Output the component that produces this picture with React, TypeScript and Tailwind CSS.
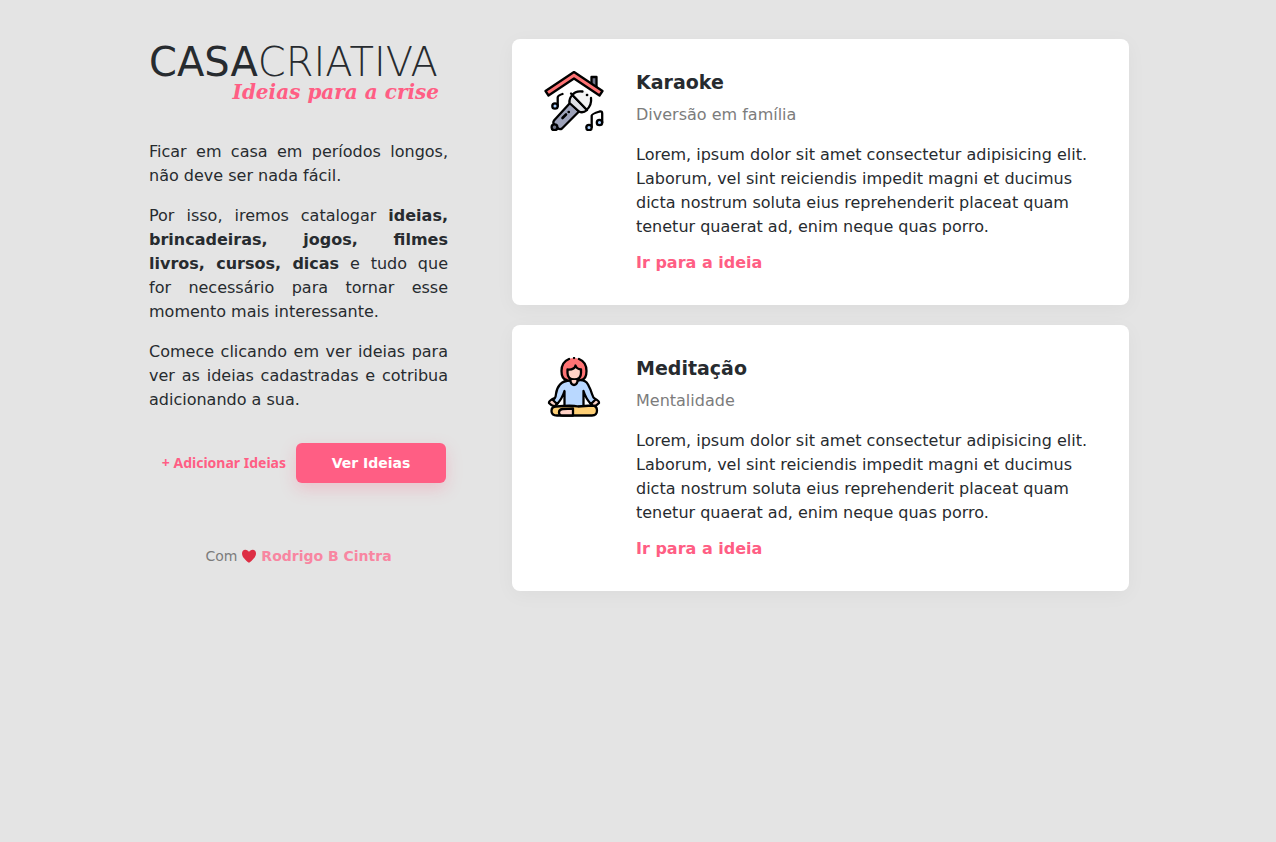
import React from "react";

type Idea = {
  title: string;
  category: string;
  description: string;
  icon: React.ReactNode;
};

function KaraokeIcon() {
  return (
    <svg viewBox="0 0 60 60" className="size-[60px]" fill="none" stroke="#000" strokeWidth="2.3" strokeLinecap="round" strokeLinejoin="round" aria-hidden="true">
      <path d="M47.500 13V6h5v11" fill="#707487" />
      <path d="M1.500 20 30 1l28.500 19-3 4.500L30 7.500 4.500 24.500Z" fill="#fe7374" />
      <path d="m10 49.500 16-17.500 9 8.500-17 17q-2 1.500-4.500-.5l-3-3q-2-2-.5-4.500Z" fill="#9da2b9" />
      <path d="M25.500 32q-.5-5 3-8L43 39q-4 3.500-8 1.500Z" fill="#dfe1e6" />
      <path d="M28 24 43 39q4.500-3.500 4.500-9.500a11 11 0 0 0-11-10.500Q31 19 28 24Z" fill="#f3f3f3" stroke="none" />
      <path d="M27 22.500 43 39M28.500 24q3-4.500 10-3.500M47 27q1 7-4.500 12" />
      <path d="M43 24h.1" strokeWidth="2.600" />
      <path d="m18.500 47 3.500-3.500M24.700 41h.1" strokeWidth="2.600" />
      <circle cx="10.500" cy="56.300" r="2.900" fill="#707487" />
      <path d="M13.700 35V26.500q0-2 4.800-3.500" />
      <circle cx="11" cy="35" r="2.700" fill="#a9cfff" />
      <path d="M47.700 56V44.500q0-1.500 8-4 2.500-.5 2.500 2V51.500" />
      <circle cx="45" cy="56.500" r="2.700" fill="#a9cfff" />
      <circle cx="55.500" cy="51.500" r="2.700" fill="#a9cfff" />
    </svg>
  );
}

function MeditationIcon() {
  return (
    <svg viewBox="0 0 60 60" className="size-[60px]" fill="none" stroke="#000" strokeWidth="2.300" strokeLinecap="round" strokeLinejoin="round" aria-hidden="true">
      <path d="M21 22.500q-3.500-2-3.500-8.500C17.500 5 24 1 30 1s12.500 4 12.500 13q0 6.500-3.500 8.500l-4 1H25Z" fill="#fe7374" stroke="none" />
      <path d="M25 2Q17.500 5 17.500 14q0 8 5 9M35 2q7.500 3 7.500 12 0 8-5 9M30 1h.1" />
      <path d="M23.500 12.500q7 .5 8-4 1 3.500 5.500 4v3.500q0 6.500-6.700 6.500t-6.800-6.500Z" fill="#ffd2c6" />
      <path d="M9.500 41.500q-5 2.500-4.500 4.500 3 3.500 6 3l3-3ZM50.500 41.500q5 2.500 4.500 4.500-3 3.500-6 3l-3-3Z" fill="#ffd2c6" />
      <path d="M26.500 23.500q-7 0-10.500 4T12 37t-3.500 5.500l4.500 4.500q5-5 7.500-13v16h19V34q2.500 8 7.500 13l4.500-4.500Q49 41 48 37t-4-9.500-10.500-4Z" fill="#b9d8ff" />
      <path d="M26.500 23v1.500q1 3.500 3.500 3.500t3.500-3.500V23" fill="#ffd2c6" />
      <path d="M12 49.500q16-1.500 22 0l14-1q5 0 5 5t-5 5H13q-5.500 0-5.500-4.500t4.500-4.500Z" fill="#ffd076" />
      <path d="m29 51.500-10.500.5q-3.500.5-3.500 3.500t4 3H29Z" fill="#ffd2c6" />
    </svg>
  );
}

const description =
  "Lorem, ipsum dolor sit amet consectetur adipisicing elit. Laborum, vel sint reiciendis impedit magni et ducimus dicta nostrum soluta eius reprehenderit placeat quam tenetur quaerat ad, enim neque quas porro.";

const ideas: Idea[] = [
  { title: "Karaoke", category: "Diversão em família", description, icon: <KaraokeIcon /> },
  { title: "Meditação", category: "Mentalidade", description, icon: <MeditationIcon /> },
];

function Logo() {
  return (
    <h1 className="w-[290px] text-[40px] leading-[46px] whitespace-nowrap">
      <span>CASA</span>
      <span className="font-extralight">CRIATIVA</span>
      <span className="block text-right font-['DejaVu_Serif',serif] text-xl leading-[14px] font-bold text-[#ff5e84] italic">
        Ideias para a crise
      </span>
    </h1>
  );
}

function IdeaCard({ idea }: { idea: Idea }) {
  return (
    <article className="flex items-start gap-8 rounded-lg bg-white p-8 shadow-[0_4px_20px_rgba(0,0,0,0.04)]">
      <div className="shrink-0">{idea.icon}</div>
      <div className="min-w-0">
        <h2 className="text-[19px] leading-[22px] font-bold">{idea.title}</h2>
        <p className="mt-[10px] text-[#7c7c7c]">{idea.category}</p>
        <p className="mt-4">{idea.description}</p>
        <a href="#ideia" className="mt-[14px] block w-fit leading-5 font-bold text-[#ff5e84]">
          Ir para a ideia
        </a>
      </div>
    </article>
  );
}

export default function App() {
  return (
    <div className="min-h-screen bg-[#e4e4e4] pr-6 pl-[26px] font-['DejaVu_Sans',sans-serif] text-base leading-6 text-[#272b2f]">
      <div className="mx-auto grid max-w-[980px] grid-cols-[299px_minmax(0,1fr)] gap-16 pt-[39px] pb-10">
        <aside>
          <Logo />
          <div className="mt-[41px] space-y-4 text-justify">
            <p>Ficar em casa em períodos longos, não deve ser nada fácil.</p>
            <p>
              Por isso, iremos catalogar <strong>ideias,</strong> <strong>brincadeiras, jogos, filmes</strong>{" "}
              <strong>livros, cursos, dicas</strong> e tudo que for&nbsp;necessário para tornar esse momento mais
              interessante.
            </p>
            <p>Comece clicando em ver ideias para ver as ideias cadastradas e cotribua adicionando a sua.</p>
          </div>
          <div className="mt-[31px] flex items-center justify-end gap-[10px] pr-0.5">
            <button type="button" className="font-['Noto_Sans',sans-serif] text-sm font-bold whitespace-nowrap text-[#ff5e84]">
              + Adicionar Ideias
            </button>
            <button type="button" className="h-10 w-[150px] rounded-md bg-[#ff5e84] text-sm font-bold text-white shadow-[0_6px_16px_rgba(255,94,132,0.25)]">
              Ver Ideias
            </button>
          </div>
          <footer className="mt-[61px] flex items-center justify-center gap-1 text-sm leading-6 text-[#7c7c7c]">
            Com
            <svg viewBox="0 0 16 16" className="size-4" fill="#dd2e44" aria-label="amor">
              <path d="M15 5.400C15 3.300 13.600 1.800 11.700 1.800 10 1.800 8.700 2.700 8 4.100 7.300 2.700 6 1.800 4.300 1.800 2.400 1.800 1 3.300 1 5.400 1 9 4.800 12.300 8 14.800 11.200 12.300 15 9 15 5.400Z" />
            </svg>
            <a href="#autor" className="font-bold text-[#f886a1]">
              Rodrigo B Cintra
            </a>
          </footer>
        </aside>
        <main className="space-y-5">
          {ideas.map((idea) => (
            <IdeaCard key={idea.title} idea={idea} />
          ))}
        </main>
      </div>
    </div>
  );
}
